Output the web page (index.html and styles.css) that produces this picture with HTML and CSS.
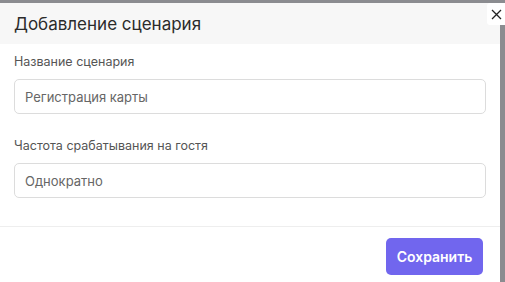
FILE: index.html
```html
<!DOCTYPE html>
<html lang="ru">
<head>
<meta charset="utf-8">
<link rel="stylesheet" href="styles.css">
</head>
<body>
<div class="backdrop">
  <div class="modal">
    <div class="modal-header">
      <h1 class="modal-title">Добавление сценария</h1>
    </div>
    <div class="modal-body">
      <div class="field">
        <label class="field-label">Название сценария</label>
        <div class="input">Регистрация карты</div>
      </div>
      <div class="field">
        <label class="field-label">Частота срабатывания на гостя</label>
        <div class="input">Однократно</div>
      </div>
    </div>
    <div class="modal-footer">
      <button class="btn-primary">Сохранить</button>
    </div>
  </div>
  <button class="close-btn" aria-label="Закрыть">
    <svg width="11" height="11" viewBox="0 0 11 11"><path d="M1 1L10 10M10 1L1 10" stroke="#222" stroke-width="1.3" fill="none"/></svg>
  </button>
</div>
</body>
</html>
```

FILE: styles.css
```css
* { box-sizing: border-box; }
html, body {
  margin: 0;
  padding: 0;
  width: 505px;
  height: 282px;
  overflow: hidden;
  font-family: Inter, "Noto Sans", sans-serif;
}
.backdrop {
  position: relative;
  width: 505px;
  height: 282px;
  background: #8b8c90;
  padding-top: 3px;
}
.modal {
  width: 500px;
  height: 279px;
  background: #fff;
  display: flex;
  flex-direction: column;
}
.modal-header {
  height: 41px;
  background: #f7f7f7;
  display: flex;
  align-items: center;
  padding: 0 14px;
}
.modal-title {
  margin: 0;
  font-size: 17px;
  font-weight: 400;
  color: #2b2b2b;
}
.modal-body {
  padding: 9px 14px 0 14px;
  display: flex;
  flex-direction: column;
  gap: 23px;
  height: 183px;
  border-bottom: 1px solid #eeeeee;
}
.field {
  display: flex;
  flex-direction: column;
  gap: 8px;
}
.field-label {
  font-size: 12.5px;
  color: #555;
  line-height: 18px;
}
.input {
  width: 472px;
  height: 35px;
  border: 1px solid #dcdcdc;
  border-radius: 5px;
  display: flex;
  align-items: center;
  padding: 0 10px;
  font-size: 13px;
  color: #666;
}
.modal-footer {
  display: flex;
  justify-content: flex-end;
  padding: 11px 17px 0 0;
}
.btn-primary {
  width: 97px;
  height: 37px;
  border: none;
  border-radius: 5px;
  background: #7166ee;
  color: #fff;
  font-family: inherit;
  font-size: 14px;
  font-weight: 600;
}
.close-btn {
  position: absolute;
  top: 3px;
  right: 0;
  width: 18px;
  height: 22px;
  border: none;
  border-radius: 3px 0 0 3px;
  background: #fff;
  padding: 0;
  display: flex;
  align-items: center;
  justify-content: center;
}
```
